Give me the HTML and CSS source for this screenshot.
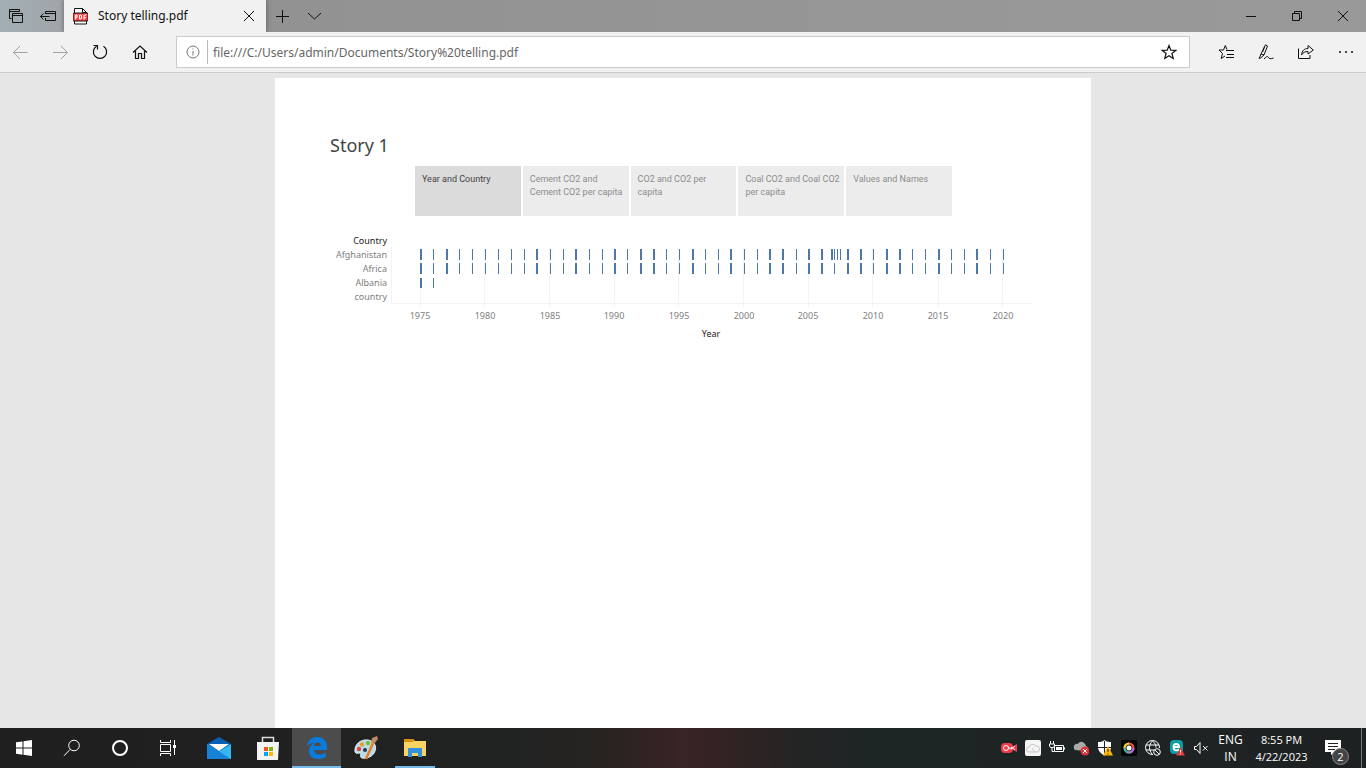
FILE: index.html
```html
<!DOCTYPE html>
<html lang="en">
<head>
<meta charset="utf-8">
<title>Story telling.pdf</title>
<link rel="stylesheet" href="styles.css">
</head>
<body>
<header class="titlebar">
  <button class="tool" aria-label="Tabs you've set aside"><svg width="16" height="16" viewBox="0 0 16 16"><path d="M3.500 10.500h-2v-9h10v2M1.500 3.500h10M4.500 5.500h10v9h-10zM4.500 7.500h10"/></svg></button>
  <button class="tool" aria-label="Set these tabs aside"><svg width="16" height="16" viewBox="0 0 16 16"><path d="M5.500 6V3.500h10v9h-10V10M5.500 5.500h10M.5 8.500h9M3.500 5.500l-3 3 3 3"/></svg></button>
  <div class="tab">
    <svg width="15" height="17" viewBox="0 0 15 17"><path d="M1.500 .5h8l4 4v11.500h-12z" fill="#fff" stroke="#111"/><path d="M9.500 .5v4h4" fill="none" stroke="#111"/><rect y="5" width="15" height="8" rx="1" fill="#f44"/><path d="M2.500 11.500v-4.500h1.500v2.500h-1.500M6.500 7h1.500l.5 1v2l-.5 1H6.500zM11 11.500v-4.500h2.500M11 9.500h2" fill="none" stroke="#fff"/></svg>
    <span class="tab-title">Story telling.pdf</span>
    <button class="close" aria-label="Close tab"><svg width="12" height="12" viewBox="0 0 12 12"><path d="M1 1l10 10M11 1L1 11"/></svg></button>
  </div>
  <button class="tool" aria-label="New tab"><svg width="14" height="14" viewBox="0 0 14 14"><path d="M7.500 1v13M1 7.500h13"/></svg></button>
  <button class="tool" aria-label="Show tab previews"><svg width="14" height="14" viewBox="0 0 14 14"><path d="M1 4l6.500 6L14 4"/></svg></button>
  <div class="window-buttons">
    <button aria-label="Minimize"><svg width="10" height="10" viewBox="0 0 10 10"><path d="M0 5.500h10"/></svg></button>
    <button aria-label="Restore"><svg width="10" height="10" viewBox="0 0 10 10"><path d="M.5 2.500h7v7h-7zM2.500 2.500v-2h7v7h-2"/></svg></button>
    <button aria-label="Close"><svg width="10" height="10" viewBox="0 0 10 10"><path d="M0 0l10 10M10 0L0 10"/></svg></button>
  </div>
</header>
<nav class="toolbar">
  <button class="nav dim" aria-label="Back"><svg width="16" height="16" viewBox="0 0 16 16"><path d="M15.500 8.500H1M8 2L1.500 8.500 8 15"/></svg></button>
  <button class="nav dim" aria-label="Forward"><svg width="16" height="16" viewBox="0 0 16 16"><path d="M1 8.500H15.500M9 2L15.500 8.500 9 15"/></svg></button>
  <button class="nav" aria-label="Refresh"><svg width="16" height="16" viewBox="0 0 16 16"><path d="M4.500 2.200A6.600 6.600 0 1 0 11.500 2.200M1.500 1.500h4v4" stroke-width="1.200"/></svg></button>
  <button class="nav" aria-label="Home"><svg width="16" height="16" viewBox="0 0 16 16"><path d="M1 8.500l7-6.500 7 6.500M3.500 7v7.500h3v-5h3v5h3V7" stroke-width="1.200"/></svg></button>
  <div class="address">
    <svg width="14" height="14" viewBox="0 0 14 14"><circle cx="7" cy="7" r="6"/><path d="M7 6v4.500M7 3.500v1"/></svg>
    <input type="text" aria-label="Address" value="file:///C:/Users/admin/Documents/Story%20telling.pdf">
    <button aria-label="Add to favorites"><svg width="16" height="16" viewBox="0 0 16 16"><path d="M8 1.500l1.800 4.700 5 .2-3.900 3.100 1.300 4.900L8 11.700l-4.200 2.700 1.300-4.900-3.900-3.100 5-.2z" stroke-width="1.200"/></svg></button>
  </div>
  <div class="actions">
    <button aria-label="Favorites"><svg width="16" height="16" viewBox="0 0 16 16"><path d="M9 5.500L7.300 1.500 5.500 6H1l3.500 3.500-1.300 5L7 12M8 6.500h8M9 10.500h7M8 13.500h8"/></svg></button>
    <button aria-label="Add notes"><svg width="16" height="16" viewBox="0 0 16 16"><path d="M1 15l2-5L7.500.8 9.500 2 6 11l-4 3.500M3 10l3 1M6.500 3L4.500 8M6 15c3-3 4-3 4.500-1.500S13 15 15.500 14"/></svg></button>
    <button aria-label="Share"><svg width="16" height="16" viewBox="0 0 16 16"><path d="M.5 4.500v10h11.500V11M3.500 11C4 6.500 6.500 4.500 10 4.500V1.500L15.300 6 10 10V7.500C7 7.500 5 8.500 3.500 11z"/></svg></button>
    <button aria-label="Settings and more"><svg width="16" height="16" viewBox="0 0 16 16"><path d="M1 8h2M7 8h2M13 8h2" stroke-width="1.500"/></svg></button>
  </div>
</nav>
<main class="viewer">
  <article class="page">
    <h1>Story 1</h1>
    <div class="story-points">
      <button class="current">Year and Country</button>
      <button>Cement CO2 and<br>Cement CO2 per capita</button>
      <button>CO2 and CO2 per<br>capita</button>
      <button>Coal CO2 and Coal CO2<br>per capita</button>
      <button>Values and Names</button>
    </div>
    <svg class="chart" width="702" height="110" viewBox="330 232 702 110" role="img" aria-label="Years by country">
      <path class="grid" d="M391.500 247v56M420.500 247v60M484.500 247v60M549.500 247v60M614.500 247v60M678.500 247v60M743.500 247v60M808.500 247v60M872.500 247v60M938.500 247v60M1002.500 247v60M391 303.500h641"/>
      <defs>
        <g id="years">
          <path class="wide" d="M421 0v11M447 0v11M537 0v11M576 0v11M615 0v11M641 0v11M654 0v11M693 0v11M731 0v11M770 0v11M783 0v11M809 0v11M822 0v11M848 0v11M861 0v11M887 0v11M900 0v11M939 0v11M977 0v11"/>
          <path class="thin" d="M433.500 0v11M459.500 0v11M472.500 0v11M485.500 0v11M498.500 0v11M511.500 0v11M524.500 0v11M550.500 0v11M563.500 0v11M589.500 0v11M602.500 0v11M627.500 0v11M666.500 0v11M679.500 0v11M705.500 0v11M718.500 0v11M744.500 0v11M757.500 0v11M796.500 0v11M834.500 0v11M873.500 0v11M912.500 0v11M925.500 0v11M951.500 0v11M964.500 0v11M990.500 0v11M1003.500 0v11"/>
        </g>
      </defs>
      <use href="#years" y="249"/>
      <use href="#years" y="263"/>
      <path class="wide" d="M832 249v11M421 278v10"/>
      <path class="thin" d="M837.500 249v11M840.500 249v11M433.500 278v10"/>
      <g class="rows"><text class="head" x="387" y="244">Country</text><text x="387" y="258">Afghanistan</text><text x="387" y="272">Africa</text><text x="387" y="286">Albania</text><text x="387" y="300">country</text></g>
      <g class="axis"><text x="420" y="319">1975</text><text x="485" y="319">1980</text><text x="550" y="319">1985</text><text x="614" y="319">1990</text><text x="679" y="319">1995</text><text x="744" y="319">2000</text><text x="808" y="319">2005</text><text x="873" y="319">2010</text><text x="938" y="319">2015</text><text x="1003" y="319">2020</text><text class="head" x="711" y="337">Year</text></g>
    </svg>
  </article>
</main>
<footer class="taskbar">
  <button aria-label="Start"><svg width="16" height="16" viewBox="0 0 16 16" fill="#fff"><path d="M0 2.300L6.500 1.400V7.500H0zM7.500 1.200L16 0v7.500H7.500zM0 8.500h6.500v6.200L0 13.800zM7.500 8.500H16V16l-8.500-1.200z"/></svg></button>
  <button aria-label="Search"><svg class="line" width="18" height="18" viewBox="0 0 18 18"><circle cx="11" cy="6.500" r="5.300"/><path d="M7 10.500L1 16.800"/></svg></button>
  <button aria-label="Cortana"><svg class="line" width="18" height="18" viewBox="0 0 18 18"><circle cx="9" cy="9" r="7" stroke-width="2"/></svg></button>
  <button aria-label="Task View"><svg class="line" width="18" height="18" viewBox="0 0 18 18"><path d="M1.500 1v2.500h10V1M1.500 5.500h10v7h-10zM1.500 17v-2.500h10V17M15.500 1v15"/><path d="M14 6h3v3h-3z" fill="#fff" stroke="none"/></svg></button>
  <div class="apps">
    <button aria-label="Mail"><svg width="24" height="24" viewBox="0 0 24 24"><path d="M0 8L12 1l12 7v7H0z" fill="#0a60b4"/><path d="M2 8h20L12 15z" fill="#fff"/><path d="M0 8l12 7.500L24 8v15H0z" fill="#35b8f1"/><path d="M0 8l24 15H0z" fill="#1683d8"/></svg></button>
    <button aria-label="Microsoft Store"><svg width="24" height="26" viewBox="0 0 24 26"><path d="M6.500 8V2.500h11V8" fill="none" stroke="#ddd" stroke-width="1.500"/><path d="M1 7h22l-1 18H1z" fill="#f3f3f3"/><path d="M8 12h4v4H8z" fill="#f25022"/><path d="M13 12h4v4h-4z" fill="#7fba00"/><path d="M8 17h4v4H8z" fill="#00a4ef"/><path d="M13 17h4v4h-4z" fill="#ffb900"/></svg></button>
    <button aria-label="Microsoft Edge" class="active"><svg width="22" height="24" viewBox="0 0 22 24"><path d="M1 10C2 4 6 1 11.500 1 17.500 1 21 5.500 21 11v3H8c.3 3 2.700 4.500 5.500 4.500 2.500 0 4.500-.7 6.300-1.800v4.400c-2 1.200-4.700 1.900-7.600 1.900C6 23 3 19.500 3 15c0-4 2.300-6.800 5.500-8.300C5 6.700 2.500 8 1 10zM8 10h7c0-2-1.200-3.600-3.300-3.600S8.300 8 8 10z" fill="#0a7bdc"/></svg></button>
    <button aria-label="Paint"><svg width="26" height="26" viewBox="0 0 26 26"><path d="M2 17C1 10 7 4 15 5c6 1 9 6 7 11-2 6-9 8-13 7-3-1 0-4-2-5-2 0-4 1-5-1z" fill="#b9dced" stroke="#e8f4fa"/><circle cx="6" cy="14" r="2.200" fill="#e2473b"/><circle cx="9" cy="9.500" r="2.200" fill="#f09a28"/><circle cx="15" cy="8" r="2.200" fill="#7cbd38"/><circle cx="12" cy="15" r="2" fill="#234"/><path d="M13 24l7-16" stroke="#e67e22" stroke-width="2.500"/><path d="M18 7l1-4 5-2 1 3-4 5z" fill="#bc8b62"/></svg></button>
    <button aria-label="File Explorer" class="running"><svg width="22" height="20" viewBox="0 0 22 20"><path d="M0 1h9l2 2h11v15H0z" fill="#fbd364"/><path d="M0 1h9l1 2-1 1H0z" fill="#d69209"/><path d="M4 19v-8q0-1 1-1h12q1 0 1 1v8h-4v-4H8v4z" fill="#3092dc"/></svg></button>
  </div>
  <div class="tray">
    <svg width="16" height="16" viewBox="0 0 16 16"><rect y="3" width="12" height="10" rx="4" fill="#ee3e4c"/><path d="M11 7l5-3v8l-5-3z" fill="#ee3e4c"/><circle cx="5" cy="8" r="2.500" fill="none" stroke="#fff"/><path d="M7 7l3 2 4-3M10 7l4 3" stroke="#fff" fill="none"/></svg>
    <svg width="16" height="16" viewBox="0 0 16 16"><rect width="16" height="16" rx="2" fill="#f5f5f5"/><path d="M4 12a2.500 2.500 0 0 1 0-5 4 4 0 0 1 7-1 3 3 0 0 1 1 6zM7 8l3 4" fill="none" stroke="#c5c5c5"/></svg>
    <svg class="line" width="16" height="16" viewBox="0 0 16 16"><path d="M5.500 5.500h9v6h-9zM15.500 7.500v2M1.500 1v3M4.500 1v3M.5 4h5v2l-1 1.500h-3L.5 6zM3 8v3.500h2"/><path d="M7 7h6v3H7z" fill="#fff" stroke="none"/></svg>
    <svg width="16" height="16" viewBox="0 0 16 16"><path d="M2 10C-1 7 2 3 5 4c2-4 7-2 8 2 3 1 2 5 0 5z" fill="#aaa"/><circle cx="12" cy="11" r="4.500" fill="#dc3238"/><path d="M10 9l4 4M14 9l-4 4" stroke="#fff"/></svg>
    <svg width="16" height="16" viewBox="0 0 16 16"><path d="M7.500 0C5 2 3 2 1 2v5c0 4 3 6.500 6.500 8.500C11 13.500 14 11 14 7V2c-2 0-4 0-6.500-2z" fill="#fff"/><path d="M7.500 1v13M1 7.500h13" stroke="#222"/><path d="M11 6l5 9.500H6z" fill="#fdb900"/><path d="M11 9v3M11 13.500v1" stroke="#222"/></svg>
    <svg width="16" height="16" viewBox="0 0 16 16"><rect width="16" height="16" rx="2" fill="#050505"/><circle cx="8" cy="8" r="4.500" fill="#222" stroke="#ef5c49" stroke-width="2"/><path d="M3.500 8A4.500 4.500 0 0 1 8 3.500" stroke="#ddd934" fill="none" stroke-width="2"/><path d="M3.500 8A4.500 4.500 0 0 0 8 12.500" stroke="#30bda0" fill="none" stroke-width="2"/><path d="M8 12.500A4.500 4.500 0 0 0 12.500 8" stroke="#b46be8" fill="none" stroke-width="2"/><circle cx="8" cy="8" r="2.500" fill="#fff"/></svg>
    <svg class="line" width="16" height="16" viewBox="0 0 16 16"><path d="M8 14.500A7 7 0 1 1 14.500 8M7.500 1c-4 4-4 9 0 13.500M7.500 1c3 2 3.500 5 3.500 6.500M1 5h13M1 10h8"/><circle cx="12" cy="12" r="3.300"/><path d="M10 10l4 4"/></svg>
    <svg width="16" height="16" viewBox="0 0 16 16"><rect x="1" width="13" height="14" rx="4" fill="#0a9da5"/><path d="M4.500 7h5.500c0-4-5.500-4-5.500 0s4 4 5.500 2.500" stroke="#fff" stroke-width="1.800" fill="none"/><path d="M11.500 7l4.500 8.500H7z" fill="#e33a3e"/><path d="M11.500 10v2.500M11.500 13.500v1" stroke="#fff"/></svg>
    <svg class="line" width="16" height="16" viewBox="0 0 16 16"><path d="M1.500 6.500h2l3.500-4v11l-3.500-4h-2zM10 6l4.500 4.500M14.500 6L10 10.500"/></svg>
  </div>
  <button class="status lang">ENG<br>IN</button>
  <button class="status clock">8:55 PM<br>4/22/2023</button>
  <button class="notify" aria-label="2 new notifications"><svg width="26" height="26" viewBox="0 0 26 26"><path d="M1 5h16v12H11l-4 3v-3H1z" fill="#fff"/><path d="M4 8.500h10M4 11.500h10M4 14.500h7" stroke="#222"/></svg><span class="badge">2</span></button>
</footer>
</body>
</html>
```
FILE: styles.css
```css
* { box-sizing: border-box; }
body { margin: 0; height: 100vh; display: flex; flex-direction: column; overflow: hidden; font: 12px/16px "Open Sans", "Noto Sans", sans-serif; background: #e6e6e6; }
button { border: 0; padding: 0; margin: 0; background: none; color: inherit; font: inherit; display: flex; align-items: center; justify-content: center; }
svg { display: block; flex: none; }
.titlebar svg, .toolbar svg { fill: none; stroke: #111; }
.titlebar { display: flex; height: 32px; flex: none; background: linear-gradient(90deg, #a2aeb4 0, #a0a5a8 64px, #929292 270px, #969696 60%, #999); }
.tool { width: 32px; }
.tab { display: flex; align-items: center; width: 202px; padding: 0 11px 0 9px; gap: 10px; background: #f1f1f1; color: #111; box-shadow: 0 0 5px #0006; }
.tab-title { flex: 1; white-space: nowrap; font-family: "Noto Sans", sans-serif; }
.window-buttons { display: flex; margin-left: auto; }
.window-buttons button { width: 46px; }
.toolbar { display: flex; align-items: center; flex: none; height: 41px; background: #f1f1f1; border-bottom: 1px solid #cbcbcb; }
.nav { width: 40px; height: 40px; }
.toolbar .dim svg { stroke: #a2a2a2; }
.address { flex: 1; display: flex; align-items: center; height: 32px; margin-left: 16px; padding: 0 12px 0 9px; border: 1px solid #cbcbcb; background: #fff; }
.toolbar .address > svg { stroke: #777; }
.address input { flex: 1; min-width: 0; height: 24px; margin-left: 7px; padding: 0 0 0 5px; border: 0; border-left: 1px solid #bbb; background: none; color: #666; font: 12px/16px "Noto Sans", sans-serif; outline: 0; }
.actions { display: flex; margin-left: 16px; }
.actions button { width: 40px; height: 40px; }
.viewer { flex: 1; min-height: 0; padding-top: 5px; }
.page { width: 100%; max-width: 816px; height: 100%; margin: 0 auto; padding: 55px; background: #fff; font-family: "Noto Sans", sans-serif; }
h1 { margin: 0 0 9px; font-size: 18px; line-height: 24px; font-weight: 400; color: #444; }
.story-points { display: grid; grid-template-columns: repeat(5, minmax(0, 1fr)); gap: 2px; width: 537px; margin: 0 auto 16px 85px; }
.story-points button { height: 50px; padding: 7px; align-items: flex-start; justify-content: flex-start; text-align: left; background: #ececec; color: #8c8c8c; font-family: Roboto, sans-serif; font-size: 9px; line-height: 13px; white-space: nowrap; }
.story-points .current { background: #dbdbdb; color: #444; }
.chart { font-size: 9px; fill: #808080; }
.grid { stroke: #f3f3f3; }
.wide, .thin { stroke: #4e79a7; }
.wide { stroke-width: 2; }
.rows { text-anchor: end; }
.axis { text-anchor: middle; }
.head { fill: #222; }
.taskbar { display: flex; align-items: center; flex: none; height: 40px; color: #fff; background: linear-gradient(90deg, #1f1f1f 0, #212222 38%, #272321 44%, #392326 50%, #302323 54%, #252424 58%, #1e2525 63%, #1e2122); }
.taskbar button { width: 48px; height: 40px; }
.line { fill: none; stroke: #fff; }
.apps { display: flex; margin-left: 2px; }
.taskbar .apps button { width: 49px; }
.apps .active { background: linear-gradient(#76b9ed, #76b9ed) bottom / 100% 2px no-repeat #4c4c4c; }
.apps .running { background: linear-gradient(#76b9ed, #76b9ed) bottom / 40px 2px no-repeat; }
.tray { display: flex; gap: 8px; margin-left: auto; }
.taskbar .status { line-height: 17px; }
.taskbar .lang { width: 43px; }
.taskbar .clock { width: 59px; font-size: 11px; }
.taskbar .notify { position: relative; width: 51px; margin-right: 4px; padding-left: 13px; justify-content: flex-start; border-right: 1px solid #777; }
.badge { position: absolute; left: 21px; top: 20px; width: 17px; height: 17px; border: 1px solid #888; border-radius: 50%; background: #444; font-size: 11px; line-height: 15px; }
```
